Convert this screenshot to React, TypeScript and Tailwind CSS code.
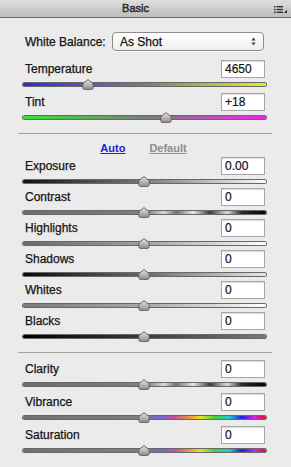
import React from "react";

type SliderDef = {
  label: string;
  value: string;
  pos: number;
  track: string;
};

const Thumb = ({ pos }: { pos: number }) => (
  <svg
    width="12"
    height="11"
    viewBox="0 0 12 11"
    className="absolute top-[1px]"
    style={{ left: `calc(${pos}% - 6px)` }}
  >
    <defs>
      <linearGradient id="thumbg" x1="0" y1="0" x2="0" y2="1">
        <stop offset="0" stopColor="#e6e6e6" />
        <stop offset="1" stopColor="#8e8e8e" />
      </linearGradient>
    </defs>
    <path
      d="M6 0.6 L11.2 4.6 L11.2 8.6 Q11.2 10.4 9.6 10.4 L2.4 10.4 Q0.8 10.4 0.8 8.6 L0.8 4.6 Z"
      fill="url(#thumbg)"
      stroke="#5a5a5a"
      strokeWidth="0.9"
      strokeLinejoin="round"
    />
  </svg>
);

const Row = ({ s, area }: { s: SliderDef; area: string }) => (
  <div>
    <div className="flex items-center justify-between h-[18px]">
      <span className="pl-[2px] text-[12px] leading-none text-[#141414] [-webkit-text-stroke:0.25px_#141414]">{s.label}</span>
      <div className="mr-[1px] flex h-[18px] w-[44px] items-center border border-[#a6a6a6] bg-white pl-[3px] text-[12px] leading-none text-[#111] [-webkit-text-stroke:0.2px_#111] shadow-[inset_0_1px_1px_rgba(0,0,0,0.15)]">
        {s.value}
      </div>
    </div>
    <div className={`relative pt-[5px] ${area}`}>
      <div className={`h-[3px] rounded-full shadow-[0_0_0_1px_rgba(60,60,60,0.75)] ${s.track}`} />
      <Thumb pos={s.pos} />
    </div>
  </div>
);

const Divider = ({ mt }: { mt: string }) => (
  <div className={`${mt} ml-[-5px] mr-[-6px] h-px bg-[#a0a0a0]`} />
);

export default function App() {
  const wb: SliderDef[] = [
    {
      label: "Temperature",
      value: "4650",
      pos: 26.7,
      track:
        "bg-[linear-gradient(to_right,#2a2ae0,#5656b8_25%,#7c7c7c_50%,#b4b452_75%,#ecec1e)]",
    },
    {
      label: "Tint",
      value: "+18",
      pos: 59,
      track:
        "bg-[linear-gradient(to_right,#38e038,#5ab05a_25%,#7c7c7c_50%,#b458b4_75%,#ee22ee)]",
    },
  ];
  const tone: SliderDef[] = [
    { label: "Exposure", value: "0.00", pos: 49.8, track: "bg-[linear-gradient(to_right,#101010,#7a7a7a_50%,#fbfbfb)]" },
    {
      label: "Contrast",
      value: "0",
      pos: 49.8,
      track:
        "bg-[linear-gradient(to_right,#6e6e6e,#7c7c7c_45%,#8c8c8c_52%,#d8d8d8_58%,#707070_63%,#e8e8e8_70%,#3c3c3c_77%,#dcdcdc_84%,#2a2a2a_90%,#050505)]",
    },
    { label: "Highlights", value: "0", pos: 49.8, track: "bg-[linear-gradient(to_right,#6a6a6a,#a0a0a0_50%,#ffffff)]" },
    { label: "Shadows", value: "0", pos: 49.8, track: "bg-[linear-gradient(to_right,#080808,#6a6a6a_50%,#e8e8e8)]" },
    { label: "Whites", value: "0", pos: 49.8, track: "bg-[linear-gradient(to_right,#7a7a7a,#a8a8a8_50%,#ffffff)]" },
    { label: "Blacks", value: "0", pos: 49.8, track: "bg-[linear-gradient(to_right,#000000,#3a3a3a_50%,#7a7a7a)]" },
  ];
  const presence: SliderDef[] = [
    {
      label: "Clarity",
      value: "0",
      pos: 49.8,
      track:
        "bg-[linear-gradient(to_right,#6e6e6e,#7c7c7c_45%,#8c8c8c_52%,#d8d8d8_58%,#707070_63%,#e8e8e8_70%,#3c3c3c_77%,#dcdcdc_84%,#2a2a2a_90%,#050505)]",
    },
    {
      label: "Vibrance",
      value: "0",
      pos: 49.8,
      track:
        "bg-[linear-gradient(to_right,#707070,#7a7a7a_30%,#7c7c84_50%,#6a6ad0_56%,#c050a0_62%,#e89040_68%,#e6e020_73%,#40d040_79%,#20c8d8_85%,#2020e8_90%,#d020e8_95%,#ee1020)]",
    },
    {
      label: "Saturation",
      value: "0",
      pos: 49.8,
      track:
        "bg-[linear-gradient(to_right,#707070,#7a7a7a_30%,#7c7c84_50%,#6a6ad0_56%,#c050a0_62%,#e89040_68%,#e6e020_73%,#40d040_79%,#20c8d8_85%,#2020e8_90%,#d020e8_95%,#ee1020)]",
    },
  ];

  return (
    <div className="h-[467px] w-[291px] overflow-hidden bg-[#ebebeb] font-['Liberation_Sans',Arial,sans-serif]">
      {/* Header */}
      <div className="relative flex h-[18px] items-center justify-center border-b border-[#6a6a6a] bg-[linear-gradient(to_bottom,#dedede,#bdbdbd)] pr-[20px]">
        <span className="text-[11px] leading-none text-[#2a2a2a] [-webkit-text-stroke:0.45px_#2a2a2a]">Basic</span>
        <svg width="13" height="7" viewBox="0 0 13 7" className="absolute right-[4px] top-[6px]">
          <rect x="0" y="0" width="1.6" height="1.4" fill="#333" />
          <rect x="2.6" y="0" width="6.4" height="1.4" fill="#333" />
          <rect x="0" y="2.8" width="1.6" height="1.4" fill="#333" />
          <rect x="2.6" y="2.8" width="6.4" height="1.4" fill="#333" />
          <rect x="0" y="5.6" width="1.6" height="1.4" fill="#333" />
          <rect x="2.6" y="5.6" width="6.4" height="1.4" fill="#333" />
          <path d="M13 3.5 L13 7 L10 7 Z" fill="#333" />
        </svg>
      </div>

      <div className="pl-[23px] pr-[25px]">
        {/* White balance */}
        <div className="mt-[14px] flex h-[19px] items-center">
          <span className="pl-[2px] text-[12px] leading-none text-[#141414] [-webkit-text-stroke:0.25px_#141414]">White Balance:</span>
          <div className="ml-auto mr-[2px] flex h-[19px] w-[152px] items-center justify-between rounded-[4px] border border-[#8c8c8c] bg-[linear-gradient(to_bottom,#ffffff,#efefef)] pl-[7px] pr-[7px] shadow-[0_1px_0_rgba(255,255,255,0.8)]">
            <span className="text-[12px] leading-none text-[#111] [-webkit-text-stroke:0.25px_#111]">As Shot</span>
            <svg width="5" height="9" viewBox="0 0 5 9">
              <path d="M2.5 0.5 L4.6 3.4 L0.4 3.4 Z" fill="#444" />
              <path d="M2.5 8.5 L4.6 5.6 L0.4 5.6 Z" fill="#444" />
            </svg>
          </div>
        </div>

        <div className="mt-[9px]">
          {wb.map((s) => (
            <Row key={s.label} s={s} area="h-[15px]" />
          ))}
        </div>

        <Divider mt="mt-[7px]" />

        <div className="mt-[7px] flex h-[14px] items-center justify-center gap-[24px] pr-[2px]">
          <span className="text-[11px] font-bold leading-none text-[#1c22d8] underline">Auto</span>
          <span className="text-[11px] font-bold leading-none text-[#8c8c8c] underline">Default</span>
        </div>

        <div className="mt-[2px]">
          {tone.map((s) => (
            <Row key={s.label} s={s} area="h-[13px]" />
          ))}
        </div>

        <Divider mt="mt-[9px]" />

        <div className="mt-[7px]">
          {presence.map((s) => (
            <Row key={s.label} s={s} area="h-[15px]" />
          ))}
        </div>
      </div>
    </div>
  );
}
